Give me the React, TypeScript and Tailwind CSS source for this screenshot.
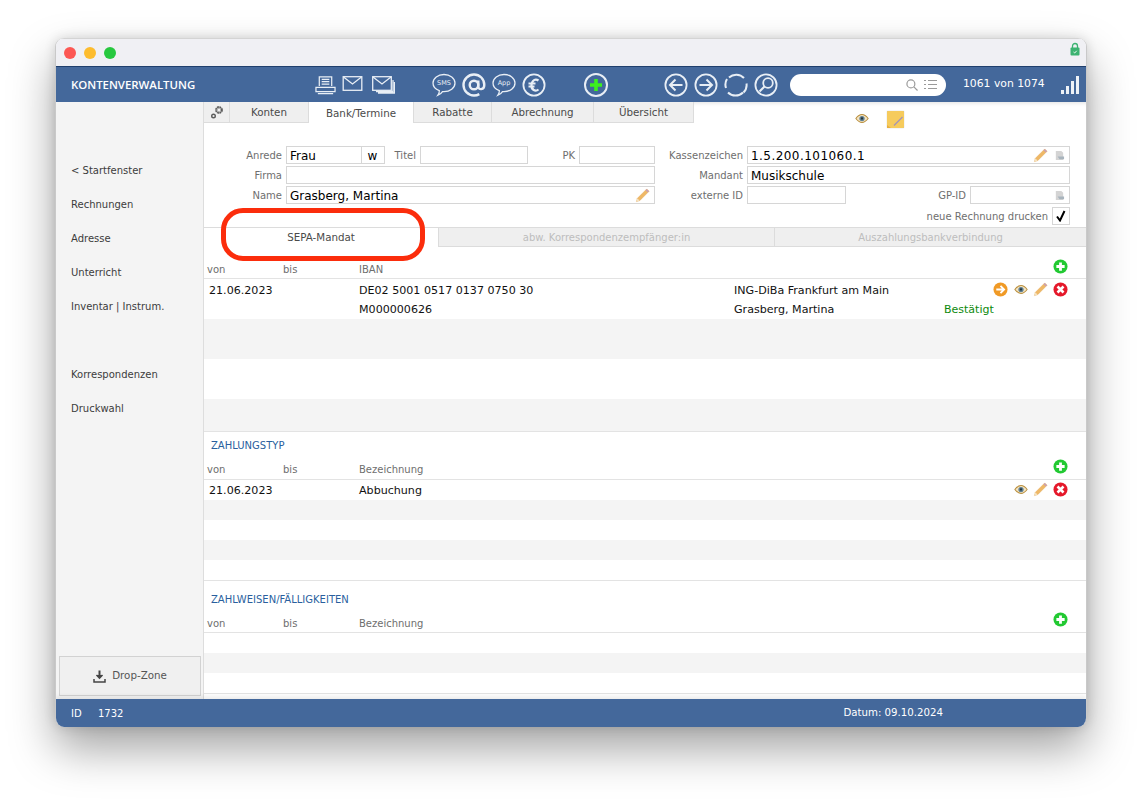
import React from 'react';

const FONT = "font-['DejaVu_Sans',Verdana,sans-serif]";

function Eye({ className = '' }: { className?: string }) {
  return (
    <svg viewBox="0 0 16 12" className={`w-[14px] h-[11px] ${className}`}>
      <path d="M1 6C4 2 6 1.500 8 1.500S12 2 15 6c-3 4-5 4.500-7 4.500S4 10 1 6z" fill="#f4e4c2" stroke="#b98f3e" strokeWidth="1.200" />
      <circle cx="8" cy="6" r="3" fill="#5e7f92" />
      <circle cx="8" cy="6" r="1.300" fill="#26343c" />
    </svg>
  );
}

function Pencil() {
  return (
    <svg viewBox="0 0 16 16" className="w-[15px] h-[15px]">
      <path d="M1.500 14.500l1-3.500L12.500 1l2.500 2.500L5 13.500z" fill="#efb866" stroke="#dba352" strokeWidth="0.400" />
      <path d="M12.500 1L15 3.500l-1.300 1.300-2.500-2.500z" fill="#c9a0b4" />
      <path d="M1.500 14.500l1-3.500 2.500 2.500z" fill="#f5e2c0" />
    </svg>
  );
}

function Plus({ size = 15 }: { size?: number }) {
  return (
    <svg viewBox="0 0 16 16" width={size} height={size}>
      <circle cx="8" cy="8" r="7.500" fill="#22c932" />
      <path d="M8 3.600v8.800M3.600 8h8.800" stroke="#fff" strokeWidth="3" />
    </svg>
  );
}

function Cross() {
  return (
    <svg viewBox="0 0 16 16" className="w-[15px] h-[15px]">
      <circle cx="8" cy="8" r="7.500" fill="#e5192b" />
      <path d="M4.800 4.800l6.400 6.400M11.200 4.800l-6.400 6.400" stroke="#fff" strokeWidth="2.800" />
    </svg>
  );
}

function ArrowOrange() {
  return (
    <svg viewBox="0 0 16 16" className="w-[15px] h-[15px]">
      <circle cx="8" cy="8" r="7.500" fill="#f09a26" />
      <path d="M3.500 8h8M8 4.200L11.800 8 8 11.800" stroke="#fff" strokeWidth="2" fill="none" />
    </svg>
  );
}

function DocIcon() {
  return (
    <svg viewBox="0 0 12 12" className="w-[11px] h-[11px]">
      <path d="M2 1h6l2 2v8H2z" fill="#d4d4d4" />
      <path d="M4 7h7v3H6z" fill="#a8b4bd" />
    </svg>
  );
}

function RoundBtn({ children }: { children: React.ReactNode }) {
  return (
    <svg viewBox="0 0 24 24" className="w-6 h-6" fill="none" stroke="#e8eef5" strokeWidth="1.800">
      <circle cx="12" cy="12" r="10.600" />
      {children}
    </svg>
  );
}

function Bubble({ label }: { label: string }) {
  return (
    <div className="relative w-[24px] h-[24px]">
      <svg viewBox="0 0 24 24" className="w-6 h-6" fill="none" stroke="#e8eef5" strokeWidth="1.300">
        <path d="M12 1.500c6 0 11 3.700 11 8.600s-5 8.600-11 8.600l-1.500-.1c-1 1.600-2.600 2.800-4.600 3.600 1-1.400 1.500-3 1.400-4.600C3.400 16.300 1 13.500 1 10.100 1 5.200 6 1.500 12 1.500z" />
      </svg>
      <span className={`absolute left-0 right-0 top-[6px] text-center text-[6.500px] leading-[9px] text-[#e8eef5] ${FONT}`}>{label}</span>
    </div>
  );
}

function Field({ w, value, icons, grow, center, wide }: { w?: string; value?: string; icons?: React.ReactNode; grow?: boolean; center?: boolean; wide?: boolean }) {
  return (
    <div className={`${w ?? ''} ${grow ? 'flex-1' : ''} h-[18px] border border-[#d6d6d6] bg-white flex items-center pl-[3px] pr-[4px] text-[12px] text-black`}>
      <span className={`flex-1 truncate pt-[2px] ${center ? 'text-center' : ''} ${wide ? 'tracking-[0.45px]' : ''}`}>{value}</span>
      {icons}
    </div>
  );
}

function Label({ w, children, flat }: { w: string; children: React.ReactNode; flat?: boolean }) {
  return <div className={`${w} text-right text-[10px] text-[#6e6e6e] pr-[4px] ${flat ? '' : 'pt-[1px]'} shrink-0`}>{children}</div>;
}

function HeadRow({ third, pt, pb, plusPos }: { third: string; pt: string; pb: string; plusPos: string }) {
  return (
    <div className={`relative flex items-end ${pt} ${pb} pl-[3px] border-b border-[#e3e3e3] text-[10px] leading-[13px] text-[#6e6e6e]`}>
      <span className="w-[76px]">von</span>
      <span className="w-[76px]">bis</span>
      <span>{third}</span>
      <span className={`absolute right-[18px] ${plusPos}`}><Plus /></span>
    </div>
  );
}

function Stripes({ rows }: { rows: string[] }) {
  return (
    <>
      {rows.map((r, i) => (
        <div key={i} className={r} />
      ))}
    </>
  );
}

const NAV: [string, string][] = [
  ['< Startfenster', 'mt-[62px]'],
  ['Rechnungen', 'mt-[20px]'],
  ['Adresse', 'mt-[20px]'],
  ['Unterricht', 'mt-[20px]'],
  ['Inventar | Instrum.', 'mt-[20px]'],
  ['Korrespondenzen', 'mt-[54px]'],
  ['Druckwahl', 'mt-[20px]'],
];

const TABS = ['Konten', 'Bank/Termine', 'Rabatte', 'Abrechnung', 'Übersicht'];
const TAB_W = ['w-[79px]', 'w-[105px]', 'w-[78px]', 'w-[102px]', 'w-[100px]'];

export default function App() {
  return (
    <div className={`w-[1142px] h-[802px] bg-white pt-[38px] pl-[55px] overflow-hidden ${FONT}`}>
      <div className="relative w-[1032px] h-[689px] flex flex-col rounded-[9px] border-x border-[#c9c9c9] shadow-[0_22px_45px_rgba(0,0,0,0.36),0_0_12px_rgba(0,0,0,0.14)] overflow-hidden bg-white">
        {/* title bar */}
        <div className="h-[28px] shrink-0 bg-[#f0f0f4] border-t border-[#d4d4d4] flex items-center pl-[8px] gap-[8px] relative">
          <span className="w-3 h-3 rounded-full bg-[#fc5753]" />
          <span className="w-3 h-3 rounded-full bg-[#fdbc2e]" />
          <span className="w-3 h-3 rounded-full bg-[#27c83f]" />
          <svg viewBox="0 0 10 14" className="absolute right-[6px] top-[3px] w-[10px] h-[14px]">
            <path d="M2.500 6V4a2.500 2.500 0 015 0v2" fill="none" stroke="#3cb371" strokeWidth="1.300" />
            <rect x="0.500" y="5.500" width="9" height="8" rx="1" fill="#3cb371" />
            <path d="M3.500 10l1.200 1 2-2.200" stroke="#fff" fill="none" strokeWidth="0.900" />
          </svg>
        </div>

        {/* blue toolbar */}
        <div className="h-[36px] shrink-0 bg-[#44689b] border-t border-[#1f3f6d] flex items-center text-white">
          <div className="w-[259px] pl-[15px] text-[11.400px] font-['Open_Sans',sans-serif] font-semibold shrink-0">KONTENVERWALTUNG</div>
          <div className="flex items-center">
            <svg viewBox="0 0 22 20" className="w-[21px] h-[20px]" fill="none" stroke="#e8eef5" strokeWidth="1.300">
              <path d="M4.500 11V1.500h13V11M7 4h8M7 6.500h8M7 9h8" />
              <path d="M1 12.500h20v4.500H1zM3 19h16" />
            </svg>
            <svg viewBox="0 0 20 15" className="w-[21px] h-[15px] ml-[6px] mb-[3px]" fill="none" stroke="#e8eef5" strokeWidth="1.300">
              <rect x="0.700" y="0.700" width="18.600" height="13.600" />
              <path d="M1 1l9 7 9-7" />
            </svg>
            <svg viewBox="0 0 23 18" className="w-[23px] h-[18px] ml-[9px]" fill="none" stroke="#e8eef5" strokeWidth="1.300">
              <rect x="0.700" y="0.700" width="18.600" height="13.600" />
              <path d="M1 1l9 7 9-7M21 4v11.500H4M22.500 6v11H6" />
            </svg>
          </div>
          <div className="flex items-center gap-[6px] ml-[37px]">
            <Bubble label="SMS" />
            <svg viewBox="0 0 24 24" className="w-6 h-6" fill="none" stroke="#e8eef5" strokeWidth="2.400">
              <circle cx="12" cy="12" r="4.300" />
              <path d="M16.300 7.500v6c0 4 6 3.500 6-1.500 0-6-4.500-10.500-10.300-10.500a10.500 10.500 0 100 21c2 0 3.800-.5 5.300-1.400" />
            </svg>
            <Bubble label="App" />
            <RoundBtn>
              <path d="M16.500 7.500c-3-2-6.500-.5-7 4.500s4 7 7 4.500M6.500 10.500h7M6.500 13.500h6" strokeWidth="2.200" />
            </RoundBtn>
          </div>
          <div className="ml-[38px] w-[24px] h-[24px] rounded-full border-2 border-[#e8eef5] flex items-center justify-center">
            <svg viewBox="0 0 14 14" className="w-[14px] h-[14px]">
              <path d="M7 1v12M1 7h12" stroke="#3cf01e" strokeWidth="3.600" />
            </svg>
          </div>
          <div className="flex items-center gap-[6px] ml-[56px]">
            <RoundBtn><path d="M18.500 12H6M11.500 6.500L6 12l5.500 5.500" strokeWidth="2" /></RoundBtn>
            <RoundBtn><path d="M5.500 12H18M12.500 6.500L18 12l-5.500 5.500" strokeWidth="2" /></RoundBtn>
            <svg viewBox="0 0 24 24" className="w-6 h-6" fill="none" stroke="#e8eef5" strokeWidth="2">
              <path d="M5 4.500A10.600 10.600 0 0120 5M22.500 10.500a10.600 10.600 0 01-3 9M19 19.500a10.600 10.600 0 01-15 0M2 15a10.600 10.600 0 011-9" />
            </svg>
            <RoundBtn>
              <circle cx="14" cy="10" r="4.800" />
              <path d="M10.500 13.500L5.500 18.500" strokeWidth="2.200" />
            </RoundBtn>
          </div>
          <div className="ml-[12px] w-[156px] h-[22px] rounded-full bg-white flex items-center justify-end pr-[9px] gap-[6px]">
            <svg viewBox="0 0 13 13" className="w-[12px] h-[12px]" fill="none" stroke="#9a9a9a" strokeWidth="1.300">
              <circle cx="5.300" cy="5.300" r="4.300" />
              <path d="M8.500 8.500L12.500 12.500" />
            </svg>
            <svg viewBox="0 0 13 11" className="w-[13px] h-[11px]" stroke="#9a9a9a" strokeWidth="1.200">
              <path d="M0 1.500h2M4 1.500h9M0 5.500h2M4 5.500h9M0 9.500h2M4 9.500h9" />
            </svg>
          </div>
          <div className="ml-[17px] text-[10.800px] whitespace-nowrap">1061 von 1074</div>
          <div className="ml-[16px] flex items-end gap-[2px] h-[19px]">
            <span className="w-[3px] h-[4px] bg-[#eef2f7]" />
            <span className="w-[3px] h-[8px] bg-[#eef2f7]" />
            <span className="w-[3px] h-[13px] bg-[#eef2f7]" />
            <span className="w-[3px] h-[18px] bg-[#eef2f7]" />
          </div>
        </div>

        <div className="flex-1 flex min-h-0">
          {/* sidebar */}
          <aside className="w-[148px] shrink-0 bg-[#f4f4f4] flex flex-col border-r border-[#dddddd] relative">
            {NAV.map(([t, m]) => (
              <div key={t} className={`${m} pl-[15px] h-[14px] leading-[14px] text-[10px] text-[#3c3c3c]`}>{t}</div>
            ))}
            <div className="mt-auto mb-[3px] ml-[3px] mr-[2px] h-[40px] bg-[#f0f0f0] border border-[#d2d2d2] flex items-center justify-center gap-[6px] text-[10.300px] text-[#555]">
              <svg viewBox="0 0 13 13" className="w-[13px] h-[13px]" fill="none" stroke="#444" strokeWidth="1.500">
                <path d="M6.500 0.500V7" strokeWidth="2" />
                <path d="M3.500 5l3 3.200 3-3.200" fill="#444" />
                <path d="M1 9v3h11V9" />
              </svg>
              <span>Drop-Zone</span>
            </div>
          </aside>

          {/* main */}
          <main className="flex-1 min-w-0 flex flex-col shadow-[inset_0_5px_4px_-4px_rgba(0,0,0,0.12)]">
            {/* main tabs */}
            <div className="h-[21px] shrink-0 flex items-stretch relative">
              <div className="w-[26px] bg-[#efefef] border-r border-b border-[#dcdcdc] flex items-center justify-center">
                <svg viewBox="0 0 14 14" className="w-[14px] h-[14px]" fill="none" stroke="#5c5c5c">
                  <circle cx="9" cy="5" r="2.800" strokeWidth="2.200" strokeDasharray="1.700 0.500" />
                  <circle cx="3.500" cy="11" r="1.800" strokeWidth="1.400" />
                </svg>
              </div>
              {TABS.map((t, i) => (
                <div key={t} className={`${TAB_W[i]} flex items-center justify-center pt-[2px] text-[10.300px] text-[#4a4a4a] border-r border-[#dcdcdc] ${i === 1 ? 'bg-white' : 'bg-[#efefef] border-b'}`}>
                  {t}
                </div>
              ))}
              <div className="absolute left-[651px] top-[11px]"><Eye /></div>
              <div className="absolute left-[683px] top-[9px] w-[17px] h-[17px] bg-[#f6cb5c] rounded-[1px] shadow-[0_0_1px_rgba(0,0,0,0.4)]">
                <svg viewBox="0 0 17 17" className="w-[17px] h-[17px]">
                  <path d="M7 14.500L15.500 6" stroke="#a394b8" strokeWidth="1.300" />
                  <path d="M0 14l4 3H0z" fill="#e8b040" />
                </svg>
              </div>
            </div>

            {/* form */}
            <div className="h-[104px] shrink-0 flex pt-[23px]">
              <div className="w-[451px] flex flex-col gap-[2px] shrink-0">
                <div className="flex items-center">
                  <Label w="w-[82px]">Anrede</Label>
                  <Field w="w-[76px]" value="Frau" />
                  <Field w="w-[24px] ml-[-1px]" value="w" center />
                  <Label w="w-[35px]">Titel</Label>
                  <Field w="w-[108px]" />
                  <Label w="w-[51px]">PK</Label>
                  <Field w="w-[76px]" />
                </div>
                <div className="flex items-center">
                  <Label w="w-[82px]">Firma</Label>
                  <Field grow />
                </div>
                <div className="flex items-center">
                  <Label w="w-[82px]">Name</Label>
                  <Field grow value="Grasberg, Martina" icons={<Pencil />} />
                </div>
              </div>
              <div className="w-[415px] flex flex-col gap-[2px] shrink-0">
                <div className="flex items-center">
                  <Label w="w-[92px]">Kassenzeichen</Label>
                  <Field grow wide value="1.5.200.101060.1" icons={<span className="flex items-center gap-[6px]"><Pencil /><DocIcon /></span>} />
                </div>
                <div className="flex items-center">
                  <Label w="w-[92px]">Mandant</Label>
                  <Field grow value="Musikschule" />
                </div>
                <div className="flex items-center">
                  <Label w="w-[92px]">externe ID</Label>
                  <Field w="w-[99px]" />
                  <Label w="w-[124px]">GP-ID</Label>
                  <Field grow icons={<DocIcon />} />
                </div>
                <div className="flex items-center justify-end mt-[1px]">
                  <Label w="w-[200px]" flat>neue Rechnung drucken</Label>
                  <div className="w-[18px] h-[18px] border border-[#d6d6d6] flex items-center justify-center">
                    <svg viewBox="0 0 12 12" className="w-[12px] h-[12px]" fill="none" stroke="#000" strokeWidth="2">
                      <path d="M2 6.500L5 10.500 9.500 1" />
                    </svg>
                  </div>
                </div>
              </div>
            </div>

            {/* sub tabs */}
            <div className="h-[20px] shrink-0 flex text-[10px]">
              <div className="w-[234px] border-t border-[#dcdcdc] flex items-center justify-center text-[#4a4a4a] bg-white text-[10.300px]">SEPA-Mandat</div>
              <div className="w-[337px] bg-[#efefef] border border-[#dcdcdc] flex items-center justify-center text-[#bdbdbd]">abw. Korrespondenzempfänger:in</div>
              <div className="flex-1 bg-[#efefef] border-y border-[#dcdcdc] flex items-center justify-center text-[#bdbdbd]">Auszahlungsbankverbindung</div>
            </div>

            <HeadRow third="IBAN" pt="pt-[16px]" pb="pb-[2px]" plusPos="bottom-[4px]" />
            <div className="h-[40px] shrink-0 relative text-[11.100px] text-[#111]">
              <div className="h-[20px] flex items-center pl-[5px] pt-[4px]">
                <span className="w-[150px]">21.06.2023</span>
                <span className="w-[375px]">DE02 5001 0517 0137 0750 30</span>
                <span>ING-DiBa Frankfurt am Main</span>
              </div>
              <div className="h-[20px] flex items-center pl-[155px] pt-[2px]">
                <span className="w-[375px]">M000000626</span>
                <span className="w-[210px]">Grasberg, Martina</span>
                <span className="text-[#0d8a0d] text-[11px]">Bestätigt</span>
              </div>
              <div className="absolute right-[18px] top-[3px] flex items-center gap-[5px]">
                <ArrowOrange />
                <span className="w-[15px] flex justify-center"><Eye /></span>
                <Pencil />
                <Cross />
              </div>
            </div>
            <Stripes rows={['h-[40px] shrink-0 bg-[#f4f4f4]', 'h-[40px] shrink-0 bg-white', 'h-[33px] shrink-0 bg-[#f4f4f4] border-b border-[#e3e3e3]']} />

            <div className="h-[14px] mt-[7px] shrink-0 pl-[7px] text-[10px] leading-[14px] text-[#2a5f9e]">ZAHLUNGSTYP</div>
            <HeadRow third="Bezeichnung" pt="pt-[10px]" pb="pb-[3px]" plusPos="bottom-[5px]" />
            <div className="h-[20px] shrink-0 relative flex items-center pl-[5px] pt-[3px] text-[11.100px] text-[#111]">
              <span className="w-[150px]">21.06.2023</span>
              <span>Abbuchung</span>
              <div className="absolute right-[18px] top-[2px] flex items-center gap-[5px]">
                <span className="w-[15px] flex justify-center"><Eye /></span>
                <Pencil />
                <Cross />
              </div>
            </div>
            <Stripes rows={['h-[20px] shrink-0 bg-[#f4f4f4]', 'h-[20px] shrink-0 bg-white', 'h-[20px] shrink-0 bg-[#f4f4f4]', 'h-[21px] shrink-0 bg-white border-b border-[#e3e3e3]']} />

            <div className="h-[14px] mt-[12px] shrink-0 pl-[7px] text-[10px] leading-[14px] text-[#2a5f9e]">ZAHLWEISEN/FÄLLIGKEITEN</div>
            <HeadRow third="Bezeichnung" pt="pt-[10px]" pb="pb-[2px]" plusPos="bottom-[5px]" />
            <Stripes rows={['h-[20px] shrink-0 bg-white', 'h-[20px] shrink-0 bg-[#f4f4f4]', 'h-[21px] shrink-0 bg-white border-b border-[#e3e3e3]']} />
          </main>
        </div>

        {/* footer */}
        <div className="h-[28px] shrink-0 bg-[#44689b] flex items-center text-[10px] text-white pl-[15px] relative z-10 shadow-[0_-3px_4px_rgba(0,0,0,0.07)]">
          <span className="w-[27px]">ID</span>
          <span>1732</span>
          <span className="ml-[720px] text-[10.200px]">Datum: 09.10.2024</span>
        </div>

        {/* red annotation */}
        <div className="absolute left-[165px] top-[170px] w-[204px] h-[53px] rounded-[22px] border-[5px] border-[#fb2d0c] z-20" />
      </div>
    </div>
  );
}
